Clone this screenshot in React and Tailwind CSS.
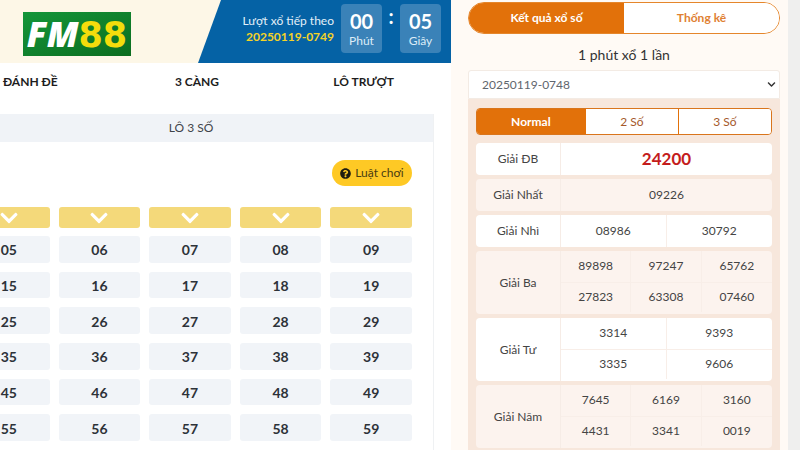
import { FaChevronDown, FaQuestionCircle } from 'react-icons/fa'
import clsx from 'clsx'

const tabs = ['ĐÁNH ĐỀ', '3 CÀNG', 'LÔ TRƯỢT']

const columns = [5, 6, 7, 8, 9]
const rows = [0, 1, 2, 3, 4, 5]

const prizes = [
  { name: 'Giải ĐB', numbers: ['24200'], special: true },
  { name: 'Giải Nhất', numbers: ['09226'] },
  { name: 'Giải Nhì', numbers: ['08986', '30792'] },
  { name: 'Giải Ba', numbers: ['89898', '97247', '65762', '27823', '63308', '07460'] },
  { name: 'Giải Tư', numbers: ['3314', '9393', '3335', '9606'] },
  { name: 'Giải Năm', numbers: ['7645', '6169', '3160', '4431', '3341', '0019'] },
]

function perRow(count) {
  if (count === 1) return 1
  return count === 6 ? 3 : 2
}

function Logo() {
  return (
    <a
      href="#"
      className="flex h-11 w-[108px] items-baseline justify-center bg-linear-to-br from-[#14963a] to-[#0c6d1f] text-[35px] leading-[43px] whitespace-nowrap"
    >
      <span className="font-['Open_Sans'] font-extrabold text-white italic">FM</span>
      <span className="font-['DejaVu_Sans'] font-bold text-[#f4dc0c]">88</span>
    </a>
  )
}

function TimeBox({ value, unit }) {
  return (
    <div className="flex h-[49px] w-[41px] flex-col items-center justify-center rounded bg-[#3a82b8] text-white">
      <span className="text-xl leading-6 font-bold">{value}</span>
      <span className="text-xs leading-4 text-[#dcecf7]">{unit}</span>
    </div>
  )
}

function Header() {
  return (
    <header className="flex h-[63px] justify-between bg-[#fdf7e7]">
      <div className="flex items-center pt-1 pl-[23px]">
        <Logo />
      </div>
      <div className="flex w-[253px] items-start justify-end bg-[#0562a5] pt-1 pr-[10px] [clip-path:polygon(23px_0,100%_0,100%_100%,0_100%)]">
        <div className="pt-[9px] pr-[7px] text-right text-xs leading-4 whitespace-nowrap">
          <p className="text-[#e4f0f8]">Lượt xổ tiếp theo</p>
          <p className="font-bold text-[#f5d327]">20250119-0749</p>
        </div>
        <TimeBox value="00" unit="Phút" />
        <span className="w-[18px] text-center text-xl leading-6 font-bold text-white">:</span>
        <TimeBox value="05" unit="Giây" />
      </div>
    </header>
  )
}

function NumberBoard() {
  return (
    <section className="-ml-[51px] mr-[17px] border-r border-[#eff1f3]">
      <h2 className="bg-[#f0f3f7] text-center text-xs leading-7 text-[#3f4449]">LÔ 3 SỐ</h2>
      <div className="pt-[18px] pr-[21px] pb-5 pl-[19px]">
        <div className="flex justify-end">
          <button className="flex h-[26px] w-20 items-center justify-center gap-1 rounded-full bg-[#fec925] text-xs whitespace-nowrap text-[#4a3d12]">
            <FaQuestionCircle className="size-[11px] text-[#1f1c10]" />
            Luật chơi
          </button>
        </div>
        <div className="mt-[21px] grid grid-cols-5 gap-[9px]">
          {columns.map((col) => (
            <button
              key={col}
              aria-label={`Chọn cột ${col}`}
              className="flex h-[21px] items-center justify-center rounded-[3px] bg-[#f4d97a] text-white"
            >
              <FaChevronDown className="size-5" />
            </button>
          ))}
        </div>
        <div className="mt-2 grid h-[205px] grid-cols-5 grid-rows-6 gap-[9px]">
          {rows.map((row) =>
            columns.map((col) => (
              <button
                key={`${row}${col}`}
                className="rounded-[3px] bg-[#f1f4f8] pt-[2px] text-sm leading-none font-bold text-[#2d3238]"
              >
                {`${row}${col}`}
              </button>
            ))
          )}
        </div>
      </div>
    </section>
  )
}

function PrizeRow({ prize, shaded }) {
  const cols = perRow(prize.numbers.length)
  return (
    <tr className={shaded ? 'bg-[#fcf3ee]' : 'bg-white'}>
      <th
        scope="row"
        className="w-[85px] rounded-l border-r border-[#f6ece6] p-0 text-center text-xs font-normal text-[#444]"
      >
        {prize.name}
      </th>
      <td className="rounded-r p-0">
        <div
          className={clsx(
            'grid text-center',
            cols === 1 && 'grid-cols-1',
            cols === 2 && 'grid-cols-2',
            cols === 3 && 'grid-cols-3',
            prize.numbers.length > 3 ? 'mb-[2px] h-[61px] grid-rows-2' : 'h-8'
          )}
        >
          {prize.numbers.map((number, i) => (
            <span
              key={number}
              className={clsx(
                'flex items-center justify-center border-[#f8eee8]',
                (i + 1) % cols !== 0 && 'border-r',
                i >= cols && 'border-t',
                prize.special ? 'text-[17px] font-bold text-[#c41c1c]' : 'text-xs text-[#444]'
              )}
            >
              {number}
            </span>
          ))}
        </div>
      </td>
    </tr>
  )
}

function Results() {
  return (
    <aside className="flex-1 bg-[#fffaf5] pt-[2px] pr-2 pl-[17px]">
      <div className="flex h-8 overflow-hidden rounded-full border border-[#e5862b] text-xs">
        <button className="flex-1 bg-[#e2710a] font-bold text-white">Kết quả xổ số</button>
        <button className="flex-1 bg-white font-bold text-[#e08133]">Thống kê</button>
      </div>
      <h1 className="pt-[11px] pb-[5px] text-center text-sm leading-5 text-[#333]">1 phút xổ 1 lần</h1>
      <div className="relative">
        <select
          aria-label="Lượt xổ"
          className="block h-[29px] w-full appearance-none rounded-t-[3px] border border-[#f3ebe4] bg-white pl-[13px] text-xs text-[#5f666d]"
        >
          <option>20250119-0748</option>
        </select>
        <FaChevronDown className="pointer-events-none absolute top-[10px] right-1 size-[9px] text-[#333]" />
      </div>
      <div className="h-screen bg-[#f7e7dc] px-2 pt-[9px]">
        <div className="flex h-[27px] divide-x divide-[#e2710a] overflow-hidden rounded border border-[#d9751c] text-xs text-[#a5592a]">
          <button className="w-[37%] bg-[#e2710a] font-bold text-white">Normal</button>
          <button className="flex-1 bg-white">2 Số</button>
          <button className="flex-1 bg-white">3 Số</button>
        </div>
        <table className="mt-1 w-full table-fixed border-separate border-spacing-x-0 border-spacing-y-1">
          <tbody>
            {prizes.map((prize, i) => (
              <PrizeRow key={prize.name} prize={prize} shaded={i % 2 === 1} />
            ))}
          </tbody>
        </table>
      </div>
    </aside>
  )
}

export default function App() {
  return (
    <div className="grid h-screen grid-cols-[451fr_349fr] overflow-hidden bg-white font-[Lato,'Noto_Sans',sans-serif]">
      <main className="min-w-0 overflow-hidden">
        <Header />
        <nav className="-ml-[53px] mr-1 grid h-[51px] grid-cols-3 pt-[10px] text-center text-xs leading-[18px] font-bold text-[#1d1d1d]">
          {tabs.map((tab) => (
            <a key={tab} href="#">
              {tab}
            </a>
          ))}
        </nav>
        <NumberBoard />
      </main>
      <div className="flex min-w-0">
        <Results />
        <div className="w-3 bg-[#efefee]" />
      </div>
    </div>
  )
}
